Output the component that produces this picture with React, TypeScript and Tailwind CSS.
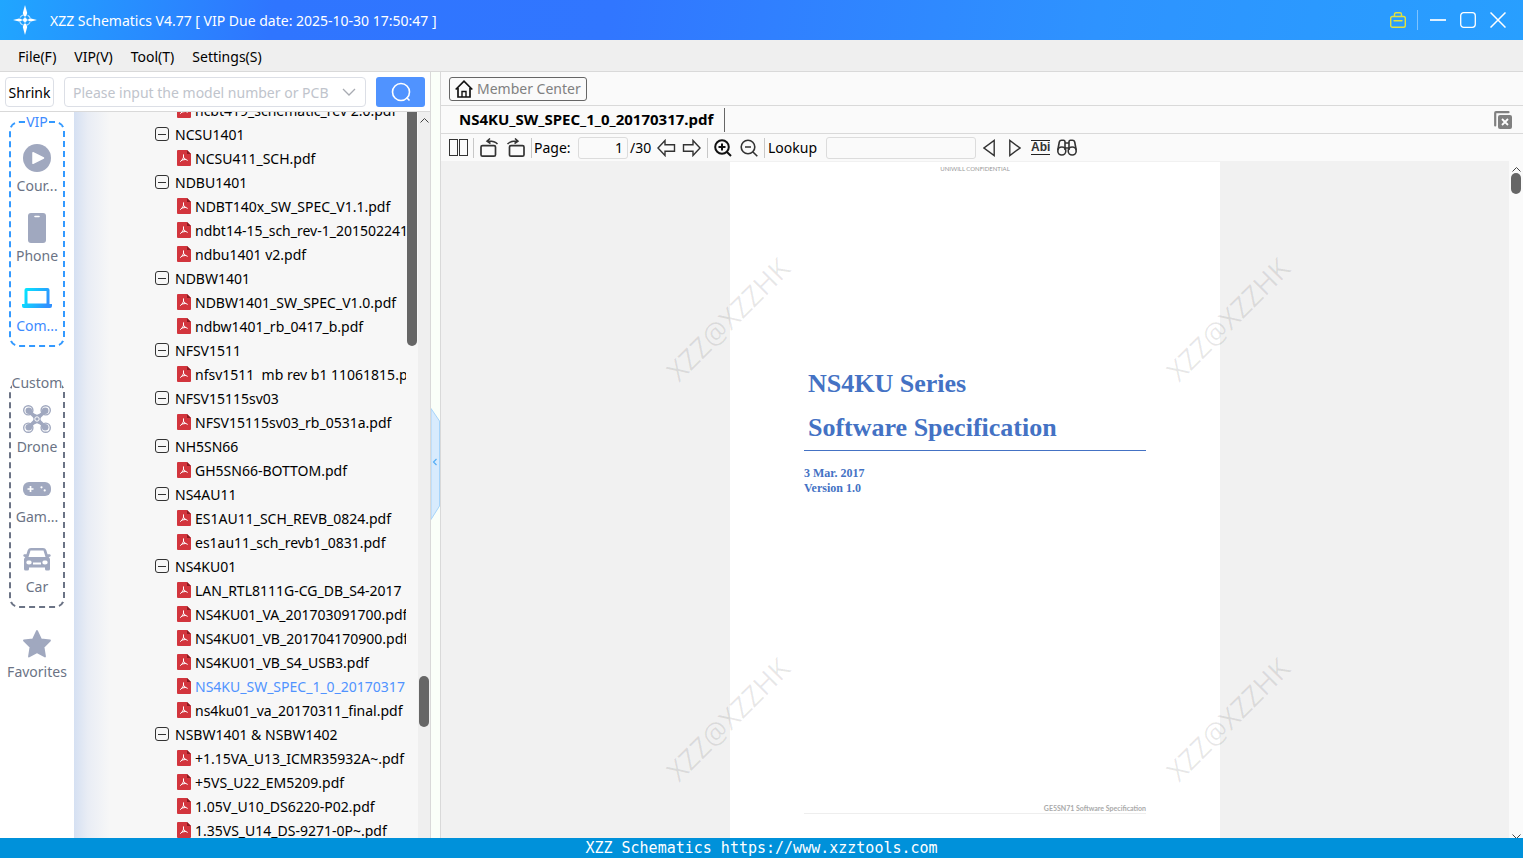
import React, { useState } from 'react';

type IconProps = { className?: string };

const LogoIcon = () => (
  <svg width="24" height="30" viewBox="0 0 24 30" fill="#fff">
    <path d="M12 0 14.2 8 13.2 11H10.8L9.8 8Z" />
    <path d="M12 30 14.2 22 13.2 19H10.8L9.8 22Z" />
    <path d="M0 15 6 13.4 8.5 14V16L6 16.6Z" />
    <path d="M24 15 18 13.4 15.5 14V16L18 16.6Z" />
    <circle cx="12" cy="15" r="2" />
    <path d="M12 11V19M8 15H16" stroke="#fff" strokeWidth="0.8" />
    <circle cx="12" cy="15" r="5.5" fill="none" stroke="#fff" strokeWidth="1.2" strokeDasharray="4.3 4.3" strokeDashoffset="-2.2" opacity="0.7" />
  </svg>
);

const ToolboxIcon = () => (
  <svg width="16" height="16" viewBox="0 0 16 16" fill="none" stroke="#e3e23c" strokeWidth="1.4" strokeLinecap="round">
    <rect x="0.7" y="4.5" width="14.6" height="10.8" rx="1.8" />
    <path d="M4.5 4.2V2.5Q4.5 0.8 6 0.8H10Q11.5 0.8 11.5 2.5V4.2M4 8.8H12" />
  </svg>
);

const PlayIcon = () => (
  <svg width="28" height="28" viewBox="0 0 28 28">
    <circle cx="14" cy="14" r="14" fill="#a0a8bf" />
    <path d="M10 8.7 20.5 14 10 19.3Z" fill="#fff" stroke="#fff" strokeWidth="1.5" strokeLinejoin="round" />
  </svg>
);

const PhoneIcon = () => (
  <svg width="18" height="30" viewBox="0 0 18 30">
    <rect width="18" height="30" rx="3" fill="#a0a8bf" />
    <path d="M7 3.5H11" stroke="#fff" strokeWidth="1.6" strokeLinecap="round" />
  </svg>
);

const LaptopIcon = () => (
  <svg width="30" height="20" viewBox="0 0 30 20">
    <defs>
      <linearGradient id="laptop" x1="0" x2="1" y1="0" y2="0.3">
        <stop offset="0" stopColor="#00f0ff" />
        <stop offset="1" stopColor="#3091ff" />
      </linearGradient>
    </defs>
    <path fill="url(#laptop)" fillRule="evenodd" d="M4.5 0H25.5Q27.5 0 27.5 2V16H30V18Q30 20 28 20H2Q0 20 0 18V16H2.5V2Q2.5 0 4.5 0ZM5.5 3V15.5H24.5V3Z" />
  </svg>
);

const DroneIcon = () => (
  <svg width="28" height="28" viewBox="0 0 28 28" fill="none" stroke="#a0a8bf">
    <circle cx="5.3" cy="5.3" r="4.6" strokeWidth="1.4" />
    <circle cx="22.7" cy="5.3" r="4.6" strokeWidth="1.4" />
    <circle cx="5.3" cy="22.7" r="4.6" strokeWidth="1.4" />
    <circle cx="22.7" cy="22.7" r="4.6" strokeWidth="1.4" />
    <g fill="#a0a8bf" stroke="none">
      <circle cx="5.8" cy="5.8" r="3.3" />
      <circle cx="22.2" cy="5.8" r="3.3" />
      <circle cx="5.8" cy="22.2" r="3.3" />
      <circle cx="22.2" cy="22.2" r="3.3" />
      <path d="M9.500 8 14 9.800 18.500 8 17.500 14 18.500 20 14 18.200 9.500 20 10.500 14Z" />
    </g>
    <path d="M6 6 22 22M22 6 6 22" strokeWidth="3.6" />
    <circle cx="14" cy="14" r="2.2" fill="#a0a8bf" stroke="#fff" />
  </svg>
);

const GamepadIcon = () => (
  <svg width="28" height="14" viewBox="0 0 28 14">
    <rect width="28" height="14" rx="6" fill="#a0a8bf" />
    <path d="M4.500 7H10.500M7.500 4V10" stroke="#fff" strokeWidth="1.7" />
    <circle cx="18.5" cy="5.3" r="1.1" fill="#fff" />
    <circle cx="21.7" cy="8.4" r="1.1" fill="#fff" />
  </svg>
);

const CarIcon = () => (
  <svg width="28" height="23" viewBox="0 0 28 23">
    <path fill="#a0a8bf" fillRule="evenodd" d="M8 0H20Q22.5 0 23.3 2.2L24.5 6.3 27 6.2Q28.5 7.5 27 8.7L25.7 9Q27 10 27 11.5V21Q27 22.5 25.5 22.5H23.5Q22 22.5 22 21V19.5H6V21Q6 22.5 4.5 22.5H2.5Q1 22.5 1 21V11.5Q1 10 2.3 9L1 8.7Q-0.5 7.5 1 6.2L3.5 6.3 4.7 2.2Q5.5 0 8 0ZM7.5 2.5 5.5 9H22.5L20.5 2.5ZM6 12.5A2 2 0 1 0 6 16.3 2 2 0 1 0 6 12.5ZM22 12.5A2 2 0 1 0 22 16.3 2 2 0 1 0 22 12.5ZM10 14.5V16.5H18V14.5Z" />
  </svg>
);

const StarIcon = () => (
  <svg width="28" height="28" viewBox="0 0 28 28">
    <path d="M14 1 18 9.3 27 10.5 20.5 17 22 26.5 14 22.3 6 26.5 7.5 17 1 10.5 10 9.3Z" fill="#a0a8bf" stroke="#a0a8bf" strokeWidth="1.8" strokeLinejoin="round" />
  </svg>
);

const PdfIcon = () => (
  <svg className="shrink-0" width="14" height="16" viewBox="0 0 14 16">
    <path d="M1 0H10L14 4V15Q14 16 13 16H1Q0 16 0 15V1Q0 0 1 0Z" fill="#d2353d" />
    <path d="M10 0 14 4H10Z" fill="#8c1a20" />
    <path d="M6.5 4.8V7.200Q7 9 10.300 10.300M6.500 7.500Q6 10 3.500 11.500M5 10 8.500 9.500" fill="none" stroke="#fff" strokeWidth="1" strokeLinecap="round" />
  </svg>
);

const MinusBoxIcon = () => (
  <svg className="shrink-0" width="14" height="14" viewBox="0 0 14 14" fill="none" stroke="#333">
    <rect x="0.5" y="0.5" width="13" height="13" rx="2.5" />
    <path d="M3 7.5H11" />
  </svg>
);

const HomeIcon = () => (
  <svg width="18" height="18" viewBox="0 0 18 18" fill="none" stroke="#111" strokeWidth="1.7">
    <path d="M0.7 9.5 9 1.2 17.3 9.5M3 8V17H15V8" />
    <path d="M7 17V11.5H11V17" strokeWidth="1.4" />
  </svg>
);

const CloseTabsIcon = () => (
  <svg width="18" height="18" viewBox="0 0 18 18">
    <path d="M1.200 14.500V2Q1.200 1.200 2 1.200H14.500" fill="none" stroke="#808080" strokeWidth="2.2" strokeLinecap="round" />
    <rect x="4" y="4" width="14" height="14" rx="2" fill="#808080" />
    <path d="M8 8 14 14M14 8 8 14" stroke="#fff" strokeWidth="1.8" />
  </svg>
);

const PagesIcon = () => (
  <svg width="20" height="18" viewBox="0 0 20 18" fill="none" stroke="#333">
    <rect x="0.5" y="0.5" width="8" height="16" />
    <rect x="10.5" y="0.5" width="8" height="16" />
  </svg>
);

const RotateIcon = ({ className }: IconProps) => (
  <svg className={className} width="19" height="20" viewBox="0 0 19 20" fill="none" stroke="#333" strokeWidth="1.7">
    <rect x="1" y="7.6" width="14.5" height="10.6" rx="1.5" />
    <path d="M17.500 6Q14 2.600 7 3.200M10 0.500 7 3.200 10.500 5.500" strokeWidth="1.5" />
  </svg>
);

const ArrowIcon = ({ className }: IconProps) => (
  <svg className={className} width="19" height="18" viewBox="0 0 19 18" fill="none" stroke="#333" strokeWidth="1.4">
    <path d="M1 9 8 1.5V5.7H17.5V12.3H8V16.5Z" />
  </svg>
);

const ZoomIcon = ({ plus }: { plus?: boolean }) => (
  <svg width="18" height="18" viewBox="0 0 18 18" fill="none" stroke={plus ? '#111' : '#333'} strokeWidth={plus ? 2 : 1.6}>
    <circle cx="8" cy="8" r="6.8" />
    <path d={plus ? 'M12.7 12.7 17 17M4.5 8H11.5M8 4.5V11.5' : 'M12.7 12.7 17.3 17.3M5 8H11'} />
  </svg>
);

const TriangleIcon = ({ className }: IconProps) => (
  <svg className={className} width="12" height="18" viewBox="0 0 12 18" fill="none" stroke="#333" strokeWidth="1.4">
    <path d="M11.2 1.5V16.5L1 9Z" />
  </svg>
);

const BinocularsIcon = () => (
  <svg width="20" height="18" viewBox="0 0 20 18" fill="none" stroke="#333" strokeWidth="1.6">
    <circle cx="4.8" cy="12" r="4" />
    <circle cx="15.2" cy="12" r="4" />
    <path d="M0.8 11 2.3 3Q2.8 1.2 4.5 1.2H6.5Q8 1.2 8 3V11M19.2 11 17.7 3Q17.2 1.2 15.5 1.2H13.5Q12 1.2 12 3V11M8 4H12M8 9H12" />
  </svg>
);

const CaretUp = () => (
  <svg width="9" height="5" viewBox="0 0 9 5" fill="none" stroke="#444">
    <path d="M0.5 4.5 4.5 0.5 8.5 4.5" />
  </svg>
);

const tree = [
  { name: 'NCSU1401', files: ['NCSU411_SCH.pdf'] },
  { name: 'NDBU1401', files: ['NDBT140x_SW_SPEC_V1.1.pdf', 'ndbt14-15_sch_rev-1_20150224130.pdf', 'ndbu1401 v2.pdf'] },
  { name: 'NDBW1401', files: ['NDBW1401_SW_SPEC_V1.0.pdf', 'ndbw1401_rb_0417_b.pdf'] },
  { name: 'NFSV1511', files: ['nfsv1511  mb rev b1 11061815.pdf'] },
  { name: 'NFSV15115sv03', files: ['NFSV15115sv03_rb_0531a.pdf'] },
  { name: 'NH5SN66', files: ['GH5SN66-BOTTOM.pdf'] },
  { name: 'NS4AU11', files: ['ES1AU11_SCH_REVB_0824.pdf', 'es1au11_sch_revb1_0831.pdf'] },
  {
    name: 'NS4KU01',
    files: [
      'LAN_RTL8111G-CG_DB_S4-2017',
      'NS4KU01_VA_201703091700.pdf',
      'NS4KU01_VB_201704170900.pdf',
      'NS4KU01_VB_S4_USB3.pdf',
      'NS4KU_SW_SPEC_1_0_20170317',
      'ns4ku01_va_20170311_final.pdf',
    ],
  },
  { name: 'NSBW1401 & NSBW1402', files: ['+1.15VA_U13_ICMR35932A~.pdf', '+5VS_U22_EM5209.pdf', '1.05V_U10_DS6220-P02.pdf', '1.35VS_U14_DS-9271-0P~.pdf'] },
];

const TitleBar = () => (
  <header className="flex h-10 shrink-0 items-center bg-[linear-gradient(100deg,#20a6ff_0%,#2f75ff_18%,#3176ff_40%,#2e93ff_72%,#289fff_100%)] pl-[13px] pr-[17px] text-sm text-white">
    <LogoIcon />
    <h1 className="ml-[13px] grow pt-0.5">XZZ Schematics V4.77 [ VIP Due date: 2025-10-30 17:50:47 ]</h1>
    <button aria-label="Toolbox"><ToolboxIcon /></button>
    <span className="ml-[11px] h-5 w-px bg-white/40" />
    <div className="ml-3 flex items-center gap-3.5">
      <button aria-label="Minimize">
        <svg width="16" height="16" viewBox="0 0 16 16"><path d="M0 8H16" stroke="#fff" strokeWidth="1.7" /></svg>
      </button>
      <button aria-label="Maximize">
        <svg width="16" height="16" viewBox="0 0 16 16"><rect x="0.7" y="0.7" width="14.6" height="14.6" rx="3" fill="none" stroke="#fff" strokeWidth="1.3" /></svg>
      </button>
      <button aria-label="Close">
        <svg width="16" height="16" viewBox="0 0 16 16"><path d="M0.5 0.5 15.5 15.5M15.5 0.5 0.5 15.5" stroke="#fff" strokeWidth="1.5" /></svg>
      </button>
    </div>
  </header>
);

const MenuBar = () => (
  <nav className="flex h-8 shrink-0 items-center gap-[18px] border-b border-[#d9d9d9] bg-[#efefef] px-[18px] pt-0.5 text-sm">
    <button>File(F)</button>
    <button>VIP(V)</button>
    <button>Tool(T)</button>
    <button>Settings(S)</button>
  </nav>
);

const SearchRow = () => (
  <div className="flex h-10 shrink-0 items-center border-b border-[#d9d9d9] bg-white px-[5px]">
    <button className="h-[30px] w-[49px] rounded border border-[#dcdfe6] pt-0.5 text-sm">Shrink</button>
    <div className="ml-2.5 flex h-[30px] grow items-center rounded border border-[#dcdfe6] pl-2 pr-[9px]">
      <input aria-label="Model number" placeholder="Please input the model number or PCB" className="w-[264px] pt-0.5 text-sm outline-none placeholder:text-[#c0c4cc]" />
      <button aria-label="Show models" className="ml-auto">
        <svg width="14" height="8" viewBox="0 0 14 8" fill="none" stroke="#a8abb2" strokeWidth="1.3"><path d="M1 1 7 7 13 1" /></svg>
      </button>
    </div>
    <button aria-label="Search" className="ml-2.5 flex h-[30px] w-[49px] items-center justify-center rounded-[3px] bg-[#5093ff]">
      <svg width="20" height="20" viewBox="0 0 20 20" fill="none" stroke="#fff" strokeWidth="1.6"><circle cx="10" cy="10" r="8.5" /><path d="M15.5 15.5 18.5 18.5" /></svg>
    </button>
  </div>
);

const NavItem = ({ icon, label, active }: { icon: React.ReactNode; label: string; active?: boolean }) => (
  <button className="flex w-full flex-col items-center gap-0.5">
    <span className="flex h-8 items-center">{icon}</span>
    <span className={`text-sm leading-5 ${active ? 'text-[#3d8bff]' : 'text-[#6b7385]'}`}>{label}</span>
  </button>
);

const Sidebar = () => (
  <nav className="w-[74px] shrink-0 bg-white">
    <fieldset className="mx-[9px] rounded-[10px] border-2 border-dashed border-[#3399ff] pb-[9px]">
      <legend className="mx-auto text-sm leading-5 text-[#3d8bff]">VIP</legend>
      <div className="flex flex-col gap-4 pt-2.5">
        <NavItem icon={<PlayIcon />} label="Cour..." />
        <NavItem icon={<PhoneIcon />} label="Phone" />
        <NavItem icon={<LaptopIcon />} label="Com..." active />
      </div>
    </fieldset>
    <fieldset className="mx-[9px] mt-[26px] rounded-[10px] border-2 border-dashed border-[#6b7385] pb-[9px]">
      <legend className="mx-auto text-sm leading-5 text-[#6b7385]">Custom</legend>
      <div className="flex flex-col gap-4 pt-2.5">
        <NavItem icon={<DroneIcon />} label="Drone" />
        <NavItem icon={<GamepadIcon />} label="Gam..." />
        <NavItem icon={<CarIcon />} label="Car" />
      </div>
    </fieldset>
    <div className="pt-5">
      <NavItem icon={<StarIcon />} label="Favorites" />
    </div>
  </nav>
);

const FileRow = ({ name, selected, onSelect }: { name: string; selected: boolean; onSelect: () => void }) => (
  <li>
    <button onClick={onSelect} className={`flex h-6 items-center gap-1 pl-[103px] whitespace-pre ${selected ? 'text-[#5093ff]' : ''}`}>
      <PdfIcon />
      <span className="pt-0.5">{name}</span>
    </button>
  </li>
);

const FileTree = () => {
  const [selected, setSelected] = useState('NS4KU_SW_SPEC_1_0_20170317');

  return (
    <div className="flex min-w-0 grow bg-[#f7f7f7] bg-[linear-gradient(90deg,#d5e0f2_0,#e9edf5_14px,#f7f7f7_36px)]">
      <div className="min-w-0 grow overflow-hidden text-sm">
        <ul className="-mt-3.5">
          <FileRow name="ncbt419_schematic_rev 2.0.pdf" selected={false} onSelect={() => setSelected('')} />
          {tree.map((folder) => (
            <li key={folder.name}>
              <button className="flex h-6 items-center gap-1.5 pl-[81px]">
                <MinusBoxIcon />
                <span className="pt-0.5">{folder.name}</span>
              </button>
              <ul>
                {folder.files.map((file) => (
                  <FileRow key={file} name={file} selected={file === selected} onSelect={() => setSelected(file)} />
                ))}
              </ul>
            </li>
          ))}
        </ul>
      </div>
      <div className="ml-px w-[11px] shrink-0">
        <div className="h-[234px] w-2.5 rounded-b-full bg-[#666]" />
      </div>
      <div className="flex w-3 shrink-0 flex-col items-center bg-[#efefef] pt-1.5">
        <CaretUp />
        <div className="mt-[553px] h-[51px] w-2.5 shrink-0 rounded-full bg-[#666]" />
      </div>
    </div>
  );
};

const Splitter = () => (
  <div className="flex w-[11px] shrink-0 items-center border-x border-[#d9d9d9] bg-[#fafff9]">
    <button aria-label="Collapse panel" className="mt-[17px]">
      <svg width="9" height="112" viewBox="0 0 9 112">
        <path d="M0 0.5 8.5 13V98L0 111.5Z" fill="#d8ebfd" stroke="#a6d4fa" />
        <path d="M5.5 51 2.5 54 5.5 57" fill="none" stroke="#55aef5" strokeWidth="1.2" />
      </svg>
    </button>
  </div>
);

const Divider = () => <span className="h-5 w-px bg-[#c8c8c8]" />;

const Toolbar = () => (
  <div className="flex h-[27px] shrink-0 items-center pl-2 text-sm">
    <button aria-label="Two pages" className="mr-1"><PagesIcon /></button>
    <Divider />
    <div className="flex gap-[7px] px-1.5">
      <button aria-label="Rotate left"><RotateIcon /></button>
      <button aria-label="Rotate right"><RotateIcon className="-scale-x-100" /></button>
    </div>
    <Divider />
    <label htmlFor="page" className="w-[46px] pl-0.5">Page:</label>
    <input id="page" defaultValue="1" className="h-[22px] w-[50px] rounded-[3px] border border-[#dcdcdc] bg-[#fafafa] pr-1 text-right" />
    <span className="w-[29px] pl-0.5">/30</span>
    <div className="flex gap-1.5 pr-1.5">
      <button aria-label="Previous page"><ArrowIcon /></button>
      <button aria-label="Next page"><ArrowIcon className="-scale-x-100" /></button>
    </div>
    <Divider />
    <div className="flex gap-2 px-1.5">
      <button aria-label="Zoom in"><ZoomIcon plus /></button>
      <button aria-label="Zoom out"><ZoomIcon /></button>
    </div>
    <Divider />
    <label htmlFor="lookup" className="w-[61px] pl-[3px]">Lookup</label>
    <input id="lookup" className="h-[22px] w-[150px] rounded-[3px] border border-[#dcdcdc] bg-[#fafafa] px-1" />
    <div className="flex gap-3.5 pr-2 pl-[7px]">
      <button aria-label="Find previous"><TriangleIcon /></button>
      <button aria-label="Find next"><TriangleIcon className="-scale-x-100" /></button>
    </div>
    <button className="ml-0.5 border-y border-[#222] font-['Liberation_Sans'] text-xs leading-[13px] font-bold text-[#333]">Abi</button>
    <button aria-label="Find all" className="ml-[7px]"><BinocularsIcon /></button>
  </div>
);

const Watermark = () => (
  <span className="flex items-center justify-center">
    <span className="-rotate-45 font-['Open_Sans'] text-[28px] text-black/9">XZZ@XZZHK</span>
  </span>
);

const Viewer = () => (
  <div className="relative flex min-h-0 grow overflow-hidden bg-[#f1f1f1]">
    <div className="flex grow justify-center overflow-hidden pt-px">
      <article className="flex w-[490px] flex-col bg-white px-[74px] text-[#4472c4]">
        <p className="pt-[3px] text-center font-['Lato'] text-[6px] leading-2 text-[#999]">UNIWILL CONFIDENTIAL</p>
        <div className="mt-[189px] border-b border-[#4472c4] pl-1 font-['Liberation_Serif'] text-[26px] leading-[44px] font-bold">
          <h2>NS4KU Series</h2>
          <h2>Software Specification</h2>
        </div>
        <p className="mt-[15px] font-['Liberation_Serif'] text-xs leading-[15px] font-bold">
          3 Mar. 2017
          <br />
          Version 1.0
        </p>
        <p className="mt-[308px] border-b border-[#eee] text-right font-['Lato'] text-[7px] leading-[9px] font-bold text-[#aaa]">GE5SN71 Software Specification</p>
      </article>
    </div>
    <div className="pointer-events-none absolute top-[-42px] left-[37px] grid auto-rows-[400px] grid-cols-[500px_500px]">
      <Watermark />
      <Watermark />
      <Watermark />
      <Watermark />
    </div>
    <div className="flex w-3.5 shrink-0 flex-col items-center bg-[#fafafa] pt-1.5">
      <CaretUp />
      <div className="mt-px h-[21px] w-2.5 rounded-full bg-[#666]" />
      <span className="mt-auto -mb-px rotate-180"><CaretUp /></span>
    </div>
  </div>
);

const App = () => {
  return (
    <div className="flex h-screen flex-col overflow-hidden bg-white font-['Noto_Sans','Open_Sans',sans-serif] text-black">
      <TitleBar />
      <MenuBar />
      <div className="flex min-h-0 grow">
        <aside className="flex w-[430px] shrink-0 flex-col">
          <SearchRow />
          <div className="flex min-h-0 grow overflow-hidden">
            <Sidebar />
            <FileTree />
          </div>
        </aside>
        <Splitter />
        <main className="flex min-w-0 grow flex-col bg-[#fafafa]">
          <div className="flex h-[34px] shrink-0 items-center border-b border-[#d9d9d9] pl-2">
            <button className="flex h-6 items-center gap-1 rounded-[3px] border border-[#666] px-[5px] text-sm text-[#808080]">
              <HomeIcon />
              Member Center
            </button>
          </div>
          <div className="flex h-7 shrink-0 items-center border-b border-[#d9d9d9] pr-[11px] pl-[18px]">
            <button className="text-[15px] font-bold">NS4KU_SW_SPEC_1_0_20170317.pdf</button>
            <span className="ml-[11px] h-6 w-px bg-[#666]" />
            <button aria-label="Close all tabs" className="ml-auto"><CloseTabsIcon /></button>
          </div>
          <Toolbar />
          <Viewer />
        </main>
      </div>
      <footer className="h-5 shrink-0 bg-[#0091da] text-center font-['DejaVu_Sans_Mono'] text-[15px] leading-5 text-white">XZZ Schematics https://www.xzztools.com</footer>
    </div>
  );
};

export default App;
